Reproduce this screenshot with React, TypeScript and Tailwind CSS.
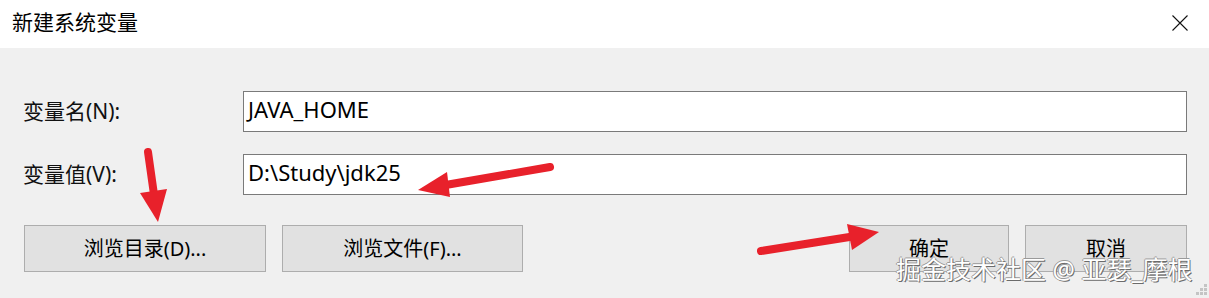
import React from 'react'

const font = { fontFamily: '"Noto Sans", "Noto Sans CJK SC", sans-serif' }

function Arrow({ tail, tip, left, right }: { tail: [number, number]; tip: [number, number]; left: [number, number]; right: [number, number] }) {
  // shaft ends where the head begins
  const mid: [number, number] = [(left[0] + right[0]) / 2, (left[1] + right[1]) / 2]
  return (
    <g>
      <line x1={tail[0]} y1={tail[1]} x2={mid[0]} y2={mid[1]} stroke="#e8212b" strokeWidth={8} strokeLinecap="round" />
      <polygon points={`${left[0]},${left[1]} ${tip[0]},${tip[1]} ${right[0]},${right[1]}`} fill="#e8212b" />
    </g>
  )
}

function Field({ label, value }: { label: string; value: string }) {
  return (
    <div className="flex items-center">
      <div className="w-[220px] text-[21px] text-[#111] shrink-0">{label}</div>
      <div className="flex-1 h-[41px] bg-white border border-[#7a7a7a] px-[4px] pt-[2px] text-[22px] leading-[30px] text-black">
        {value}
      </div>
    </div>
  )
}

function Btn({ children, w }: { children: React.ReactNode; w: string }) {
  return (
    <div className={`${w} h-[47px] bg-[#e1e1e1] border border-[#adadad] flex items-center justify-center text-[20px] text-black`}>
      {children}
    </div>
  )
}

export default function App() {
  return (
    <div className="relative w-[1209px] h-[298px] bg-[#f0f0f0] overflow-hidden" style={font}>
      {/* title bar */}
      <div className="h-[48px] bg-white flex items-center justify-between pl-[12px] pr-[21px]">
        <span className="text-[21px] text-black leading-none -mt-[4px]">新建系统变量</span>
        <svg width="16" height="16" viewBox="0 0 16 16" className="-mt-[2px]">
          <path d="M0.5 0.5 L15.5 15.5 M15.5 0.5 L0.5 15.5" stroke="#111" strokeWidth="1.1" />
        </svg>
      </div>

      {/* body */}
      <div className="pl-[23px] pr-[22px] pt-[43px]">
        <Field label="变量名(N):" value="JAVA_HOME" />
        <div className="h-[22px]" />
        <Field label="变量值(V):" value="D:\Study\jdk25" />
        <div className="flex mt-[30px]">
          <div className="flex gap-[16px] ml-[1px]">
            <Btn w="w-[242px]">浏览目录(D)...</Btn>
            <Btn w="w-[241px]">浏览文件(F)...</Btn>
          </div>
          <div className="flex gap-[16px] ml-auto">
            <Btn w="w-[160px]">确定</Btn>
            <Btn w="w-[162px]">取消</Btn>
          </div>
        </div>
      </div>

      {/* annotations */}
      <svg className="absolute inset-0 pointer-events-none" width="1209" height="298">
        <Arrow tail={[148, 152]} tip={[158, 222]} left={[140, 193]} right={[167, 189]} />
        <Arrow tail={[550, 167]} tip={[418, 190]} left={[447, 172]} right={[450, 197]} />
        <Arrow tail={[761, 251]} tip={[879, 232]} left={[847, 224]} right={[852, 250]} />
        {[
          [1204, 284],
          [1200, 288],
          [1204, 288],
          [1196, 292],
          [1200, 292],
          [1204, 292],
        ].map(([x, y]) => (
          <rect key={`${x}-${y}`} x={x} y={y} width={3} height={3} fill="#c4c4c4" />
        ))}
      </svg>

      <div className="absolute left-[896px] top-[257px] text-[25px] leading-none text-white whitespace-nowrap [text-shadow:1px_1px_0_#6b6b6b,-1px_0_0_#9a9a9a,0_-1px_0_#9a9a9a]">
        掘金技术社区 @ 亚瑟_摩根
      </div>
    </div>
  )
}
